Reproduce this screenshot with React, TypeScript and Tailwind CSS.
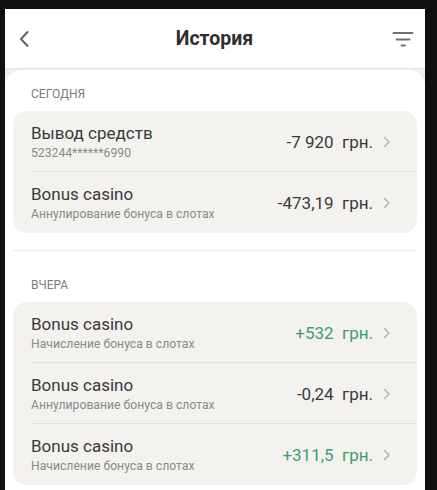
import React from "react";

type Tx = {
  title: string;
  sub: string;
  amount: string;
  positive?: boolean;
};

const groups: { label: string; items: Tx[] }[] = [
  {
    label: "Сегодня",
    items: [
      { title: "Вывод средств", sub: "523244******6990", amount: "-7 920" },
      { title: "Bonus casino", sub: "Аннулирование бонуса в слотах", amount: "-473,19" },
    ],
  },
  {
    label: "Вчера",
    items: [
      { title: "Bonus casino", sub: "Начисление бонуса в слотах", amount: "+532", positive: true },
      { title: "Bonus casino", sub: "Аннулирование бонуса в слотах", amount: "-0,24" },
      { title: "Bonus casino", sub: "Начисление бонуса в слотах", amount: "+311,5", positive: true },
    ],
  },
];

const Chevron = () => (
  <svg width="8" height="12" viewBox="0 0 8 12" fill="none" className="shrink-0">
    <path d="M1.5 1.5L6 6l-4.5 4.5" stroke="#b5b5b3" strokeWidth="1.6" strokeLinecap="round" strokeLinejoin="round" />
  </svg>
);

const Row = ({ tx, last }: { tx: Tx; last: boolean }) => (
  <div className="relative flex h-[61px] items-center pl-[18px] pr-[26px]">
    <div className="flex min-w-0 flex-1 flex-col">
      <span className="text-[17px] leading-5 text-[#3a3a3a]">{tx.title}</span>
      <span className="mt-[3px] text-[12.2px] leading-[15px] text-[#8a8a88]">{tx.sub}</span>
    </div>
    <span
      className={`whitespace-pre text-[17px] leading-6 ${tx.positive ? "text-[#3f9d6c]" : "text-[#3a3a3a]"}`}
    >
      {tx.amount + "  грн."}
    </span>
    <span className="ml-[10px]">
      <Chevron />
    </span>
    {!last && <div className="absolute bottom-0 left-[18px] right-0 h-px bg-[#e1e0dc]" />}
  </div>
);

export default function App() {
  return (
    <div
      className="h-[490px] w-[437px] overflow-hidden bg-[#0f0f0f] pl-[5px] pr-[12px] pt-[9px]"
      style={{ fontFamily: "Roboto, 'Noto Sans', sans-serif" }}
    >
      <div className="flex h-full flex-col bg-[#f1f0ec]">
        {/* header */}
        <div className="flex h-[60px] shrink-0 items-center justify-between border-b border-[#e6e5e2] bg-white pl-[12px] pr-[11px]">
          <svg width="16" height="20" viewBox="0 0 16 20" fill="none">
            <path d="M10.5 3L4 10l6.5 7" stroke="#5f5f5f" strokeWidth="1.9" strokeLinecap="round" strokeLinejoin="round" />
          </svg>
          <h1 className="ml-[4px] text-[19.5px] font-bold text-[#2e2e2e]">История</h1>
          <svg width="22" height="18" viewBox="0 0 22 18" fill="none">
            <path d="M1.5 3h19M4.5 9.5h13M9.5 15.5h3.5" stroke="#707070" strokeWidth="1.8" strokeLinecap="round" />
          </svg>
        </div>

        {/* content */}
        <div className="mt-px flex-1 rounded-t-2xl bg-white px-2 pt-[16px]">
          {groups.map((g, gi) => (
            <div key={g.label}>
              {gi > 0 && <div className="mt-[17px] h-px bg-[#ecebe8]" />}
              <div
                className={`pl-[18px] text-[12px] uppercase leading-4 text-[#7c7c7a] ${gi > 0 ? "mt-[26px]" : ""}`}
              >
                {g.label}
              </div>
              <div className="mt-[9px] overflow-hidden rounded-[14px] bg-[#f3f2ef]">
                {g.items.map((tx, i) => (
                  <Row key={i} tx={tx} last={i === g.items.length - 1} />
                ))}
              </div>
            </div>
          ))}
        </div>
      </div>
    </div>
  );
}
